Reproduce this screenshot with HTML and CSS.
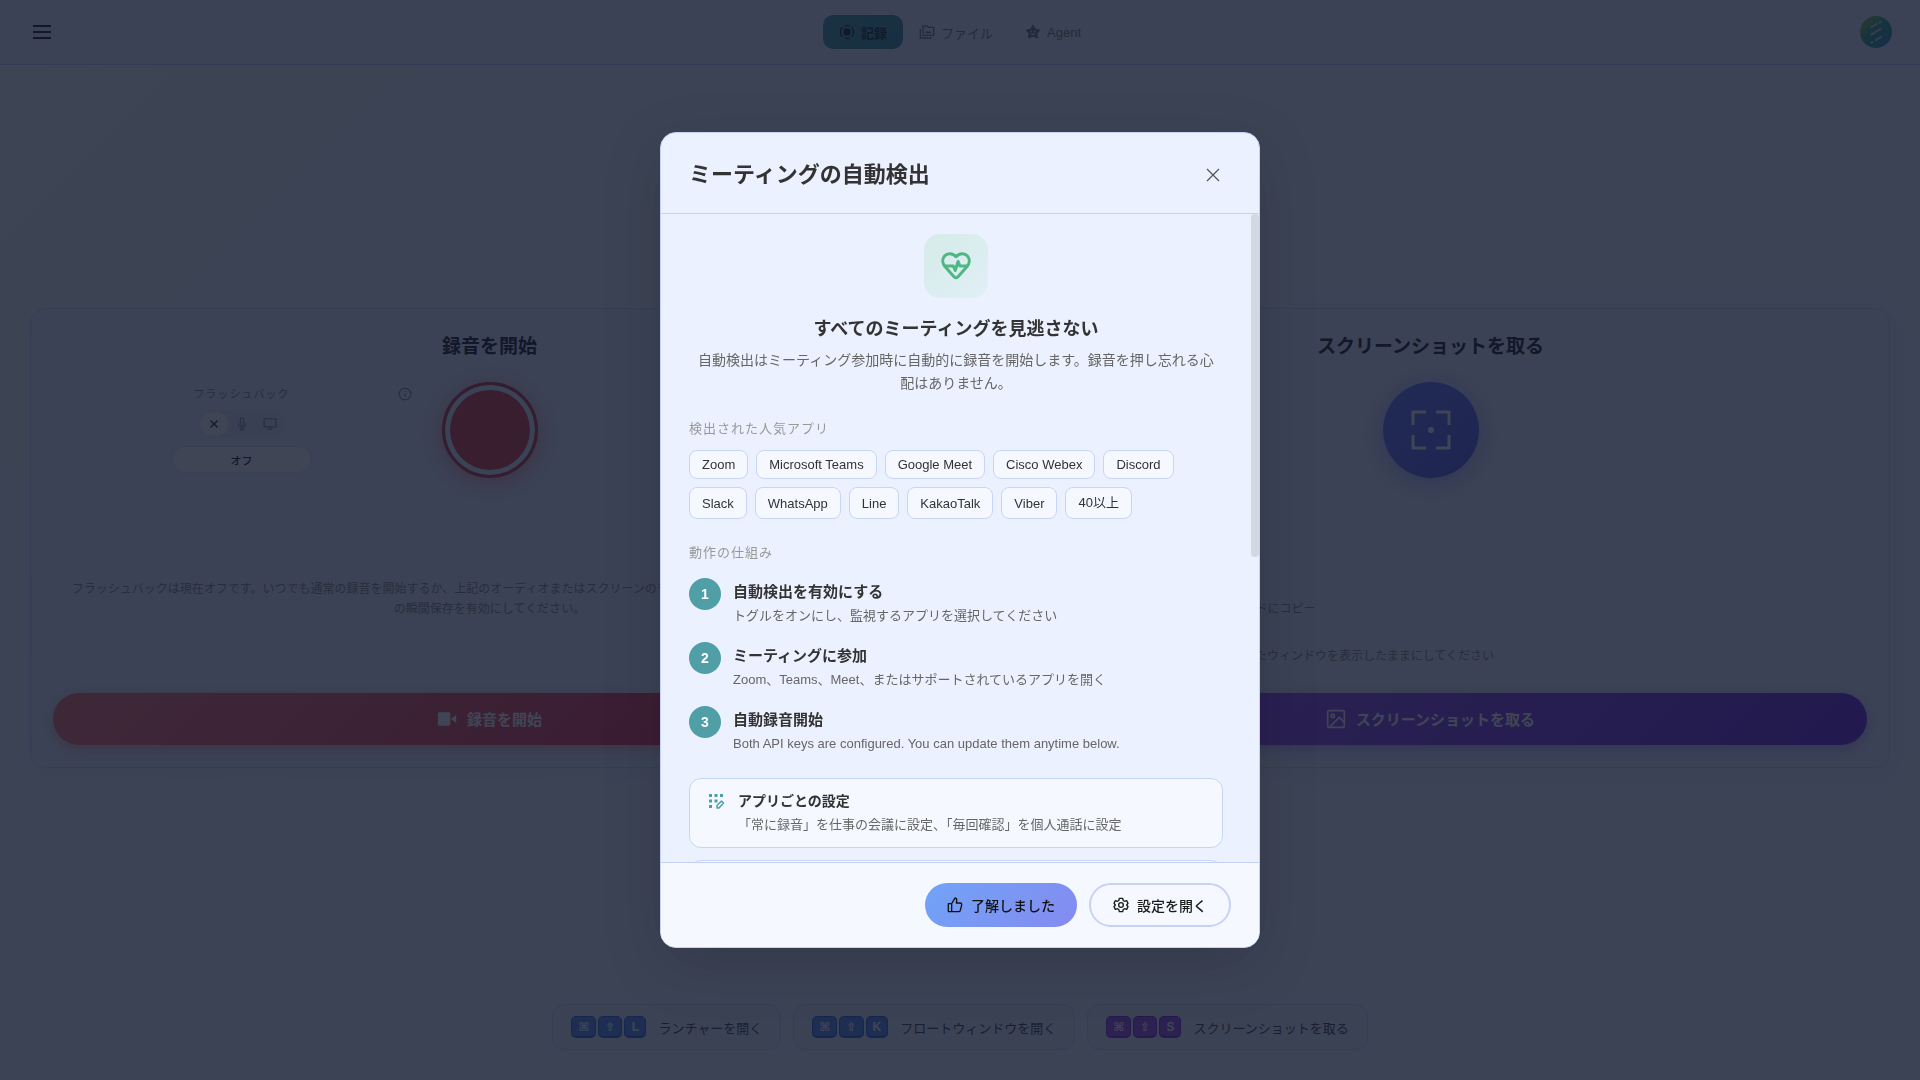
FILE: index.html
```html
<!DOCTYPE html>
<html lang="ja">
<head>
    <meta charset="UTF-8">
    <meta name="viewport" content="width=device-width, initial-scale=1.0">
    <title>ミーティングの自動検出</title>
    <link rel="stylesheet" href="styles.css">
</head>
<body>
    <header class="topbar">
        <button type="button" class="menu-button" aria-label="メニュー">
            <svg width="24" height="24" viewBox="0 0 24 24" fill="none" stroke="currentColor" stroke-width="2"><path d="M3 6h18M3 12h18M3 18h18"/></svg>
        </button>
        <nav class="tabs">
            <a href="#record" class="tab active">
                <svg width="16" height="16" viewBox="0 0 24 24" fill="none" stroke="currentColor" stroke-width="2"><circle cx="12" cy="12" r="5.5" fill="currentColor" stroke="none"/><path d="M8.5 2.7a10 10 0 0 1 7 0M19 5a10 10 0 0 1 0 14M15.5 21.3a10 10 0 0 1-7 0M5 19A10 10 0 0 1 5 5"/></svg>
                記録
            </a>
            <a href="#files" class="tab">
                <svg width="16" height="16" viewBox="0 0 24 24" fill="none" stroke="currentColor" stroke-width="2"><path d="M6 3h6l2 2h8v12H6zM2 7v14h17"/><path d="M9 14l3-4 2 2 2-2 3 4z" fill="currentColor" stroke="none"/></svg>
                ファイル
            </a>
            <a href="#agent" class="tab">
                <svg width="16" height="16" viewBox="0 0 24 24"><path d="M12 1.5q1 0 1.5 1L16 7l5 .8q2.5.7 1 2.7L18.700 14l.8 5.500q0 2.200-2 1.700L12 19l-5.500 2.200q-2 .5-2-1.700L5.300 14 2 10.500q-1.500-2 1-2.700L8 7l2.500-4.500q.5-1 1.500-1zM8.500 10v2.500h2V10zm5 0v2.500h2V10zM8 14.500q4 4 8 0z" fill="currentColor" fill-rule="evenodd"/></svg>
                Agent
            </a>
        </nav>
        <button type="button" class="avatar" aria-label="アカウント">
            <svg width="32" height="32" viewBox="0 0 32 32" fill="none" stroke="#cfe0e8" stroke-width="2" stroke-linecap="round"><path d="M11.5 11l5-3M19.5 6.5l1.5-.7M11.5 18.5l9-5.5M11.5 26.5l1-.5M16 24l5-3"/></svg>
        </button>
    </header>

    <main class="main">
        <div class="capture-card">
            <section class="capture">
                <h2 class="capture-title">録音を開始</h2>
                <div class="capture-controls">
                    <div class="flashback">
                        <div class="flashback-head">
                            <span class="flashback-label">フラッシュバック</span>
                            <svg class="info" width="14" height="14" viewBox="0 0 24 24" fill="none" stroke="currentColor" stroke-width="2"><circle cx="12" cy="12" r="10"/><path d="M12 10.5V17M12 7v1.5"/></svg>
                        </div>
                        <div class="segments">
                            <button type="button" class="segment selected" aria-label="オフ">
                                <svg width="14" height="14" viewBox="0 0 24 24" fill="none" stroke="currentColor" stroke-width="2"><path d="M6 6l12 12M18 6L6 18"/></svg>
                            </button>
                            <button type="button" class="segment" aria-label="オーディオ">
                                <svg width="14" height="14" viewBox="0 0 24 24" fill="none" stroke="currentColor" stroke-width="2"><rect x="9" y="2" width="6" height="13" rx="3"/><path d="M5 11a7 7 0 0 0 14 0M12 18v4M8 22h8"/></svg>
                            </button>
                            <button type="button" class="segment" aria-label="スクリーン">
                                <svg width="14" height="14" viewBox="0 0 24 24" fill="none" stroke="currentColor" stroke-width="2"><path d="M2 3h20v14H2zM12 17v4M8 21h8"/></svg>
                            </button>
                        </div>
                        <button type="button" class="flashback-state">オフ</button>
                    </div>
                    <button type="button" class="record-button" aria-label="録音"></button>
                </div>
                <p class="capture-note">フラッシュバックは現在オフです。いつでも通常の録音を開始するか、上記のオーディオまたはスクリーンのモードを選択して、見逃した過去のシーンなどの瞬間保存を有効にしてください。</p>
                <button type="button" class="wide-button wide-record">
                    <svg width="20" height="20" viewBox="0 0 24 24" fill="currentColor"><rect x="1" y="4" width="15" height="16" rx="2"/><path d="M17 12l6-5v10z"/></svg>
                    録音を開始
                </button>
            </section>

            <section class="capture">
                <h2 class="capture-title">スクリーンショットを取る</h2>
                <button type="button" class="shot-button" aria-label="スクリーンショット">
                    <svg width="40" height="40" viewBox="0 0 40 40" fill="none" stroke="currentColor" stroke-width="3"><path d="M2 15V2h13M25 2h13v13M38 25v13H25M15 38H2V25"/><circle cx="20" cy="20" r="3" fill="currentColor" stroke="none"/></svg>
                </button>
                <div class="capture-options">
                    <label class="option"><input type="checkbox">スクリーンショットを自動的にクリップボードにコピー</label>
                    <label class="option"><input type="checkbox">スクリーンショットの撮影中も現在開いていたウィンドウを表示したままにしてください</label>
                </div>
                <button type="button" class="wide-button wide-shot">
                    <svg width="20" height="20" viewBox="0 0 24 24" fill="none" stroke="currentColor" stroke-width="2"><rect x="2" y="2" width="20" height="20" rx="2"/><circle cx="8" cy="8" r="2"/><path d="M5 21L16 10l6 6"/></svg>
                    スクリーンショットを取る
                </button>
            </section>
        </div>
    </main>

    <footer class="shortcuts">
        <div class="shortcut">
            <span class="keys"><kbd>⌘</kbd><kbd>⇧</kbd><kbd>L</kbd></span>
            ランチャーを開く
        </div>
        <div class="shortcut">
            <span class="keys"><kbd>⌘</kbd><kbd>⇧</kbd><kbd>K</kbd></span>
            フロートウィンドウを開く
        </div>
        <div class="shortcut shortcut-shot">
            <span class="keys"><kbd>⌘</kbd><kbd>⇧</kbd><kbd>S</kbd></span>
            スクリーンショットを取る
        </div>
    </footer>

    <div class="overlay">
        <div class="modal" role="dialog" aria-modal="true" aria-labelledby="modalTitle">
            <div class="modal-header">
                <h1 id="modalTitle">ミーティングの自動検出</h1>
                <button type="button" class="close-button" aria-label="閉じる">
                    <svg width="20" height="20" viewBox="0 0 20 20" fill="none" stroke="currentColor" stroke-width="1.3"><path d="M4 4l12 12M16 4L4 16"/></svg>
                </button>
            </div>

            <div class="modal-body">
                <div class="modal-scroll">
                    <div class="intro">
                        <div class="intro-icon">
                            <svg width="36" height="36" viewBox="0 0 24 24" fill="none" stroke="currentColor" stroke-width="2" stroke-linejoin="round" stroke-linecap="round"><path d="M12 5.8C9.8 3.2 6.2 3.2 4.3 5.4 2.6 7.5 2.9 10.4 4.8 12.5L10.8 19.3Q12 20.4 13.2 19.3L19.2 12.5C21.1 10.4 21.4 7.5 19.7 5.4 17.8 3.2 14.2 3.2 12 5.800z"/><path d="M4.5 12h5.7l1.3 3 1.9-6 1.2 3h4.9"/></svg>
                        </div>
                        <h2>すべてのミーティングを見逃さない</h2>
                        <p>自動検出はミーティング参加時に自動的に録音を開始します。録音を押し忘れる心配はありません。</p>
                    </div>

                    <section class="block">
                        <h3 class="block-label">検出された人気アプリ</h3>
                        <ul class="chips">
                            <li>Zoom</li>
                            <li>Microsoft Teams</li>
                            <li>Google Meet</li>
                            <li>Cisco Webex</li>
                            <li>Discord</li>
                            <li>Slack</li>
                            <li>WhatsApp</li>
                            <li>Line</li>
                            <li>KakaoTalk</li>
                            <li>Viber</li>
                            <li class="chip-more">40以上</li>
                        </ul>
                    </section>

                    <section class="block">
                        <h3 class="block-label">動作の仕組み</h3>
                        <ol class="steps">
                            <li>
                                <span class="step-number">1</span>
                                <div class="step-text">
                                    <h4>自動検出を有効にする</h4>
                                    <p>トグルをオンにし、監視するアプリを選択してください</p>
                                </div>
                            </li>
                            <li>
                                <span class="step-number">2</span>
                                <div class="step-text">
                                    <h4>ミーティングに参加</h4>
                                    <p>Zoom、Teams、Meet、またはサポートされているアプリを開く</p>
                                </div>
                            </li>
                            <li>
                                <span class="step-number">3</span>
                                <div class="step-text">
                                    <h4>自動録音開始</h4>
                                    <p>Both API keys are configured. You can update them anytime below.</p>
                                </div>
                            </li>
                        </ol>
                    </section>

                    <section class="block features">
                        <div class="feature">
                            <svg width="20" height="20" viewBox="0 0 20 20" fill="currentColor"><path d="M3 3h3v3H3zM8.5 3h3v3h-3zM14 3h3v3h-3zM3 8.5h3v3H3zM8.5 8.5h3v3h-3zM3 14h3v3H3z"/><path d="M11 17v-2.5l4.5-4.5 2 2L13 17z" fill="none" stroke="currentColor" stroke-width="1.5" stroke-linejoin="round"/></svg>
                            <div>
                                <h4>アプリごとの設定</h4>
                                <p>「常に録音」を仕事の会議に設定、「毎回確認」を個人通話に設定</p>
                            </div>
                        </div>
                        <div class="feature">
                            <svg width="20" height="20" viewBox="0 0 20 20" fill="none" stroke="currentColor" stroke-width="2"><circle cx="10" cy="10" r="7"/><path d="M10 6v4l3 2"/></svg>
                            <div>
                                <h4>自動停止</h4>
                                <p>ミーティングが終了すると録音も停止します</p>
                            </div>
                        </div>
                    </section>
                </div>
                <div class="scroll-track"><div class="scroll-thumb"></div></div>
            </div>

            <div class="modal-footer">
                <button type="button" class="btn btn-primary">
                    <svg width="16" height="16" viewBox="0 0 24 24" fill="none" stroke="currentColor" stroke-width="2" stroke-linejoin="round"><path d="M7 10l5-8.5q3 .5 2.5 4L14 9h6.5q2 .5 1.5 3l-2 8q-.5 2-2.5 2H7zM7 10H2v12h5"/></svg>
                    了解しました
                </button>
                <button type="button" class="btn btn-secondary">
                    <svg width="16" height="16" viewBox="0 0 24 24" fill="none" stroke="currentColor" stroke-width="2" stroke-linejoin="round"><path d="M9.5 2h5l.8 3.2 2 1.2 3.2-1 2 4L20.5 12l2 2.6-2 4-3.2-1-2 1.2-.8 3.2h-5l-.8-3.2-2-1.2-3.2 1-2-4L3.500 12l-2-2.6 2-4 3.2 1 2-1.2z"/><circle cx="12" cy="12" r="3.5"/></svg>
                    設定を開く
                </button>
            </div>
        </div>
    </div>
</body>
</html>
```

FILE: styles.css
```css
* {
    box-sizing: border-box;
}

body {
    margin: 0;
    min-height: 100vh;
    display: flex;
    flex-direction: column;
    background: linear-gradient(135deg, #f2f8f4 0%, #eef3fb 40%, #f0f2ff 100%);
    color: #333;
    font-family: "Liberation Sans", "Noto Sans CJK JP", sans-serif;
}

h1, h2, h3, h4, p, ul, ol {
    margin: 0;
    padding: 0;
}

ul, ol {
    list-style: none;
}

button {
    padding: 0;
    border: none;
    background: none;
    color: inherit;
    font-family: inherit;
    cursor: pointer;
}

svg {
    display: block;
    flex: none;
}

/* top bar */
.topbar {
    display: grid;
    grid-template-columns: 1fr auto 1fr;
    align-items: center;
    height: 65px;
    padding: 0 28px;
    background-color: #eaf0ff;
    border-bottom: 1px solid #c7d2fe;
}

.menu-button {
    display: flex;
    justify-content: center;
    width: 28px;
    color: #222;
}

.tabs {
    display: flex;
}

.tab {
    display: flex;
    align-items: center;
    gap: 6px;
    height: 34px;
    padding: 0 16px;
    border-radius: 10px;
    font-size: 13px;
    color: #777;
    text-decoration: none;
}

.tab.active {
    background: linear-gradient(135deg, #4a9fa5, #3d8f9c);
    color: #1c2a30;
    font-weight: bold;
}

.avatar {
    justify-self: end;
    width: 32px;
    height: 32px;
    border-radius: 50%;
    background: linear-gradient(135deg, #b4c832, #35a58b 45%, #2f8fc0);
}

/* capture card */
.main {
    flex: 1;
    display: flex;
    align-items: center;
    padding: 6px 30px 0;
}

.capture-card {
    flex: 1;
    display: grid;
    grid-template-columns: 1fr 1fr;
    gap: 68px;
    padding: 22px;
    background-color: #eaf0ff;
    border: 1px solid #cdd8f8;
    border-radius: 16px;
    box-shadow: 0 4px 20px rgba(99, 102, 241, 0.06);
}

.capture {
    display: flex;
    flex-direction: column;
    align-items: center;
}

.capture-title {
    margin-bottom: 19px;
    font-size: 19px;
    line-height: 32px;
    color: #222;
}

.capture-controls {
    display: grid;
    grid-template-columns: 1fr auto 1fr;
    align-items: center;
    gap: 30px;
    width: 100%;
}

.flashback {
    justify-self: end;
    width: 100%;
    max-width: 340px;
    display: flex;
    flex-direction: column;
    align-items: center;
}

.flashback-head {
    display: grid;
    grid-template-columns: 1fr auto 1fr;
    align-items: center;
    width: 100%;
    margin-bottom: 9px;
    color: #888;
}

.flashback-label {
    grid-column: 2;
    font-size: 11px;
    line-height: 16px;
    letter-spacing: 1px;
}

.info {
    justify-self: end;
}

.segments {
    display: flex;
    padding: 1px;
    margin-bottom: 9px;
    border-radius: 13px;
    background-color: #e2e6f6;
}

.segment {
    display: flex;
    align-items: center;
    justify-content: center;
    width: 28px;
    height: 24px;
    border-radius: 12px;
    color: #888;
}

.segment.selected {
    background-color: #fdfdf8;
    color: #222;
}

.flashback-state {
    width: 140px;
    height: 27px;
    border: 1px solid #dde3f5;
    border-radius: 14px;
    background-color: #fdfdf8;
    color: #222;
    font-size: 11px;
    font-weight: 500;
}

.record-button {
    width: 96px;
    height: 96px;
    border: 3px solid #c53a48;
    border-radius: 50%;
    background-color: #d93c42;
    box-shadow: inset 0 0 0 5px #e6f4ff, 0 4px 24px rgba(239, 68, 68, 0.5);
}

.shot-button {
    display: flex;
    align-items: center;
    justify-content: center;
    width: 96px;
    height: 96px;
    border-radius: 50%;
    background: linear-gradient(135deg, #6a7cf8, #5a5cea);
    color: #fff;
    box-shadow: 0 4px 24px rgba(99, 102, 241, 0.5);
}

.capture-note {
    width: 100%;
    margin: 101px 0 74px;
    padding: 0 16px;
    font-size: 12px;
    line-height: 20px;
    text-align: center;
    color: #888;
}

.capture-options {
    display: flex;
    flex-direction: column;
    gap: 27px;
    width: 100%;
    margin: 121px 0 26px;
}

.option {
    display: flex;
    align-items: center;
    gap: 8px;
    font-size: 12px;
    line-height: 20px;
    color: #888;
}

.option input {
    width: 14px;
    height: 14px;
    margin: 0;
}

.wide-button {
    display: flex;
    align-items: center;
    justify-content: center;
    gap: 10px;
    width: 100%;
    height: 52px;
    margin-top: auto;
    border-radius: 26px;
    color: #fff;
    font-size: 15px;
    font-weight: bold;
}

.wide-record {
    background: linear-gradient(135deg, #f87171, #e11d48);
    box-shadow: 0 4px 14px rgba(239, 68, 68, 0.4);
}

.wide-shot {
    background: linear-gradient(135deg, #a855f7, #6d28d9);
    box-shadow: 0 4px 14px rgba(124, 58, 237, 0.4);
}

/* shortcuts */
.shortcuts {
    display: flex;
    justify-content: center;
    gap: 12px;
    padding-bottom: 30px;
}

.shortcut {
    display: flex;
    align-items: center;
    gap: 12px;
    height: 46px;
    padding: 0 18px;
    border: 1px solid #d3dbf2;
    border-radius: 12px;
    background-color: #eaeefa;
    font-size: 13px;
    color: #444;
}

.keys {
    display: flex;
    gap: 2px;
}

kbd {
    display: flex;
    align-items: center;
    justify-content: center;
    min-width: 22px;
    height: 22px;
    padding: 0 6px;
    border: 1px solid #3b66e0;
    border-bottom-width: 2px;
    border-radius: 5px;
    background-color: #5c8df6;
    color: #fff;
    font-family: "Liberation Sans", "DejaVu Sans", sans-serif;
    font-size: 12px;
    font-weight: bold;
}

.shortcut-shot kbd {
    border-color: #8228d0;
    background-color: #a04ee8;
}

/* modal */
.overlay {
    position: fixed;
    inset: 0;
    display: flex;
    align-items: center;
    justify-content: center;
    background-color: rgba(15, 23, 42, 0.8);
}

.modal {
    display: flex;
    flex-direction: column;
    width: 600px;
    max-width: 90%;
    max-height: calc(100vh - 264px);
    overflow: hidden;
    background-color: #ebf1fe;
    border: 1px solid #c3d2f5;
    border-radius: 16px;
    box-shadow: 0 16px 60px rgba(0, 0, 0, 0.15);
}

.modal-header {
    display: flex;
    align-items: center;
    justify-content: space-between;
    padding: 24px 28px 20px;
    border-bottom: 1px solid #c3d2f5;
}

.modal-header h1 {
    font-size: 22px;
    line-height: 32px;
}

.close-button {
    display: flex;
    align-items: center;
    justify-content: center;
    width: 36px;
    height: 36px;
    color: #555;
}

.modal-body {
    flex: 1;
    display: flex;
    min-height: 0;
}

.modal-scroll {
    flex: 1;
    padding: 20px 28px 40px;
    overflow-y: auto;
    scrollbar-width: none;
}

.scroll-track {
    flex: none;
    width: 8px;
}

.scroll-thumb {
    height: 53%;
    border-radius: 4px;
    background-color: #d2d8e4;
}

.intro {
    display: flex;
    flex-direction: column;
    align-items: center;
    text-align: center;
}

.intro-icon {
    display: flex;
    align-items: center;
    justify-content: center;
    width: 64px;
    height: 64px;
    margin-bottom: 16px;
    border-radius: 16px;
    background: linear-gradient(135deg, #d6ebe9, #e0eff6);
    color: #4fb783;
}

.intro h2 {
    margin-bottom: 5px;
    font-size: 18px;
    line-height: 30px;
}

.intro p {
    padding: 0 4px;
    font-size: 14px;
    line-height: 23px;
    color: #666;
}

.block {
    margin-top: 24px;
}

.block-label {
    font-size: 13px;
    font-weight: normal;
    line-height: 20px;
    letter-spacing: 1px;
    color: #999;
}

.chips {
    display: flex;
    flex-wrap: wrap;
    gap: 8px;
    margin-top: 11px;
}

.chips li {
    display: flex;
    align-items: center;
    padding: 6px 12px;
    border: 1px solid #c7d5f6;
    border-radius: 8px;
    background-color: #f5f8ff;
    font-size: 13px;
    line-height: 15px;
}

.chips .chip-more {
    line-height: 18px;
}

.steps {
    display: flex;
    flex-direction: column;
    gap: 16px;
    margin-top: 15px;
}

.steps li {
    display: flex;
    gap: 12px;
}

.step-number {
    flex: none;
    width: 32px;
    height: 32px;
    border-radius: 50%;
    background-color: #509fa7;
    color: #fff;
    font-size: 14px;
    font-weight: bold;
    line-height: 33px;
    text-align: center;
}

.step-text {
    padding-top: 2px;
}

.step-text h4 {
    margin-bottom: 2px;
    font-size: 15px;
    line-height: 24px;
}

.step-text p,
.feature p {
    font-size: 13px;
    line-height: 20px;
    color: #666;
}

.features {
    display: flex;
    flex-direction: column;
    gap: 12px;
}

.feature {
    display: flex;
    gap: 12px;
    padding: 12px 16px;
    border: 1px solid #c7d5f6;
    border-radius: 12px;
    background-color: #f5f8ff;
}

.feature svg {
    color: #509fa7;
}

.feature h4 {
    margin-bottom: 4px;
    font-size: 14px;
    line-height: 20px;
}

.modal-footer {
    display: flex;
    justify-content: flex-end;
    gap: 12px;
    padding: 20px 28px;
    border-top: 1px solid #c3d2f5;
    background-color: #f5f8ff;
}

.btn {
    display: flex;
    align-items: center;
    gap: 8px;
    height: 44px;
    padding: 0 22px;
    border-radius: 22px;
    color: #1a1a1a;
    font-size: 14px;
    font-weight: 500;
}

.btn-primary {
    background: linear-gradient(135deg, #70a4f7, #858af0);
    color: #111;
}

.btn-secondary {
    border: 2px solid #c7d2f5;
}
```
